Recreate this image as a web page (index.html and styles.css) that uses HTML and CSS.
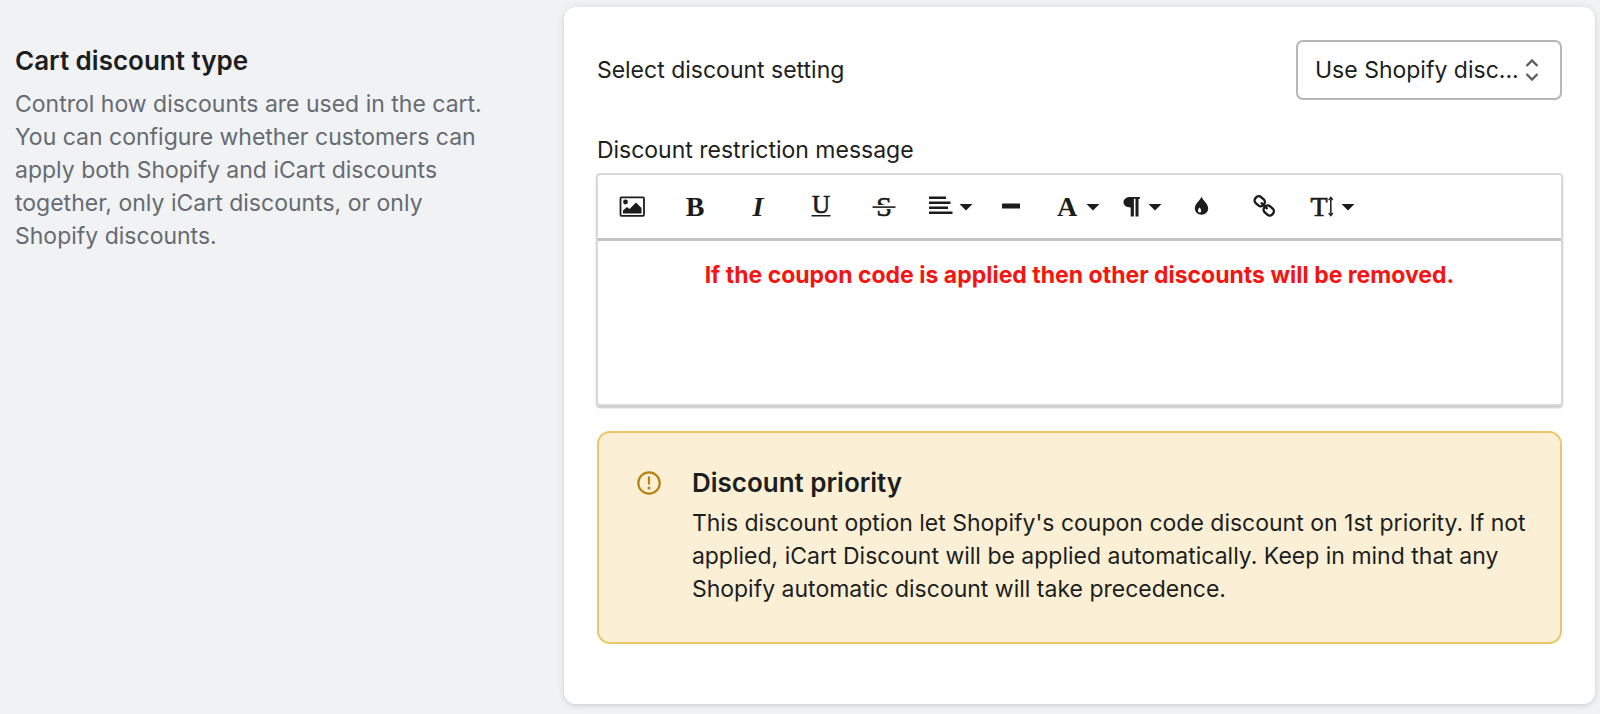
FILE: index.html
```html
<!DOCTYPE html>
<html lang="en">
<head>
<meta charset="utf-8">
<meta name="viewport" content="width=device-width, initial-scale=1">
<title>Cart discount type</title>
<link rel="stylesheet" href="styles.css">
</head>
<body>
<main class="section">
  <header class="intro">
    <h2 class="heading">Cart discount type</h2>
    <p class="intro-text">Control how discounts are used in the cart. You can configure whether customers can apply both Shopify and iCart discounts together, only iCart discounts, or only Shopify discounts.</p>
  </header>
  <section class="card">
    <div class="setting-row">
      <label for="setting">Select discount setting</label>
      <div class="select-wrap">
        <select id="setting" class="select"><option>Use Shopify disc...</option></select>
        <svg class="select-icon" width="14" height="22" viewBox="0 0 14 22" aria-hidden="true"><path d="M1.500 7 7 1.500 12.500 7M1.500 15 7 20.500 12.500 15"/></svg>
      </div>
    </div>
    <div class="message-label" id="message-label">Discount restriction message</div>
    <div class="editor">
      <div class="toolbar" role="toolbar" aria-label="Text formatting">
        <button class="tool" type="button" aria-label="Insert image"><svg width="26" height="24" viewBox="0 0 26 24"><rect x="1.500" y="2.300" width="23.500" height="18.500" rx="1" fill="none" stroke="currentColor" stroke-width="1.800"/><circle cx="6.500" cy="7" r="2.400"/><path d="M4 18.500v-3l4-3.500 2.500 2 6.500-6.500 5.500 5.500v5.500z"/></svg></button>
        <button class="tool" type="button" aria-label="Bold"><svg width="26" height="36" viewBox="0 -6 26 36"><text class="glyph bold" x="13" y="21">B</text></svg></button>
        <button class="tool" type="button" aria-label="Italic"><svg width="26" height="36" viewBox="0 -6 26 36"><text class="glyph bold italic" x="13" y="21">I</text></svg></button>
        <button class="tool" type="button" aria-label="Underline"><svg width="26" height="36" viewBox="0 -6 26 36"><text class="glyph medium small" x="13" y="18">U</text><path d="M3.500 20h19v1.500h-19z"/></svg></button>
        <button class="tool" type="button" aria-label="Strikethrough"><svg width="26" height="36" viewBox="0 -6 26 36"><text class="glyph medium" x="13" y="21">S</text><path d="M1 10h24v4H1z" fill="#fff"/><path d="M1.500 11.300h23v1.600h-23z"/></svg></button>
        <button class="tool menu" type="button" aria-label="Align"><svg width="24" height="24" viewBox="0 0 24 24"><path d="M0 1.500h17V4H0zM0 6.500h21.500V9H0zM0 11.500h19V14H0zM0 16.500h23.500V19H0z"/></svg><svg class="caret" width="14" height="8" viewBox="0 0 14 8"><path d="M.5 1h13L7 7.500z"/></svg></button>
        <button class="tool" type="button" aria-label="Horizontal rule"><svg width="26" height="24" viewBox="0 0 26 24"><rect x="4" y="8.500" width="18" height="5" rx=".5"/></svg></button>
        <button class="tool menu" type="button" aria-label="Text color"><svg width="24" height="36" viewBox="0 -6 24 36"><text class="glyph bold" x="11" y="21">A</text></svg><svg class="caret" width="14" height="8" viewBox="0 0 14 8"><path d="M.5 1h13L7 7.500z"/></svg></button>
        <button class="tool menu" type="button" aria-label="Paragraph format"><svg width="20" height="24" viewBox="0 0 20 24"><path d="M18 2v1.800h-1.500V21.500h-3V3.800h-1.600V21.500H8.700V12.500C4.500 12.500 1.500 10.500 1.500 7.300 1.500 4 4.500 2 8.400 2z"/></svg><svg class="caret" width="14" height="8" viewBox="0 0 14 8"><path d="M.5 1h13L7 7.500z"/></svg></button>
        <button class="tool" type="button" aria-label="Highlight color"><svg width="26" height="24" viewBox="0 0 26 24"><path fill-rule="evenodd" d="M12.500 1.500c1 3.800 6.700 7 6.700 12a6.700 6.200 0 0 1-13.400 0c0-5 5.700-8.200 6.700-12zM10.500 12.500c-2 2-2 5 .2 5s2-2.700-.2-5z"/></svg></button>
        <button class="tool" type="button" aria-label="Insert link"><svg width="26" height="24" viewBox="0 0 26 24"><g fill="none" stroke="currentColor" stroke-width="2.400"><rect x="2.500" y="2.200" width="10.500" height="8" rx="3.500" transform="rotate(42 7.700 6.200)"/><rect x="11.500" y="11.500" width="10.500" height="8" rx="3.500" transform="rotate(42 16.700 15.500)"/><path d="m9 7.500 6.500 6.500"/></g></svg></button>
        <button class="tool menu" type="button" aria-label="Font size"><svg width="26" height="36" viewBox="0 -6 26 36"><text class="glyph medium" x="10" y="21">T</text><path d="M21.800 4.500v14M19.800 5l2-2.500 2 2.500M19.800 18l2 2.500 2-2.500" fill="none" stroke="currentColor" stroke-width="1.500"/></svg><svg class="caret" width="14" height="8" viewBox="0 0 14 8"><path d="M.5 1h13L7 7.500z"/></svg></button>
      </div>
      <div class="message" contenteditable="true" role="textbox" aria-multiline="true" aria-labelledby="message-label" spellcheck="false">If the coupon code is applied then other discounts will be removed.</div>
    </div>
    <aside class="notice">
      <svg class="notice-icon" width="24" height="24" viewBox="0 0 24 24" aria-hidden="true"><circle cx="12" cy="12" r="10.700"/><path d="M12 5.500v8"/><circle class="dot" cx="12" cy="17" r="1.500"/></svg>
      <div>
        <h3 class="heading">Discount priority</h3>
        <p class="notice-text">This discount option let Shopify's coupon code discount on 1st priority. If not applied, iCart Discount will be applied automatically. Keep in mind that any Shopify automatic discount will take precedence.</p>
      </div>
    </aside>
  </section>
</main>
</body>
</html>
```

FILE: styles.css
```css
* {
  box-sizing: border-box;
}

body {
  margin: 0;
  background: #f0f2f4;
  color: #1c1e20;
  font: 400 23px/33px Inter, "Liberation Sans", sans-serif;
}

.section {
  display: grid;
  grid-template-columns: 35fr 64fr;
  padding: 7px 5px 10px 0;
}

.intro {
  padding: 36px 75px 0 15px;
}

.heading {
  margin: 0;
  font-size: 26px;
  line-height: 36px;
  font-weight: 600;
}

.intro-text,
.notice-text {
  margin: 0;
}

.intro-text {
  margin-top: 9px;
  color: #666b72;
}

.card {
  padding: 33px 33px 60px;
  border-radius: 12px;
  background: #fff;
  box-shadow: 0 0 10px rgba(23, 24, 24, 0.08), 0 2px 4px rgba(0, 0, 0, 0.08);
}

.setting-row {
  display: flex;
  align-items: center;
  justify-content: space-between;
}

.select-wrap {
  position: relative;
}

.select {
  appearance: none;
  width: 266px;
  height: 60px;
  padding: 0 38px 0 17px;
  border: 2px solid #b4b6b8;
  border-radius: 7px;
  background: #fff;
  color: #1c1e20;
  font: inherit;
}

.select-icon {
  position: absolute;
  top: 19px;
  right: 23px;
  fill: none;
  stroke: #5c5f62;
  stroke-width: 2.4;
  pointer-events: none;
}

.message-label {
  margin-top: 34px;
}

.editor {
  margin: 6px -1px 0;
  border: 2px solid #d6d8d9;
  border-radius: 4px;
  box-shadow: 0 2px 2px rgba(0, 0, 0, 0.22);
}

.toolbar {
  display: flex;
  height: 66px;
  padding-left: 3px;
  border-bottom: 3px solid #c4c4c4;
}

.tool {
  display: flex;
  align-items: center;
  justify-content: center;
  width: 63px;
  padding: 0;
  border: 0;
  background: none;
  color: #1c1c1c;
}

.tool svg {
  flex: none;
  fill: currentColor;
}

.menu {
  gap: 6px;
  width: 64px;
  padding-left: 6px;
}

.glyph {
  font: 28px "Liberation Serif", serif;
  text-anchor: middle;
}

.bold {
  font-weight: 700;
}

.medium {
  stroke: currentColor;
  stroke-width: 0.7;
}

.italic {
  font-style: italic;
}

.small {
  font-size: 25px;
}

.message {
  min-height: 163px;
  padding: 18px 20px;
  color: #f5140f;
  font-weight: 700;
  text-align: center;
  outline: none;
}

.notice {
  display: flex;
  gap: 31px;
  margin-top: 25px;
  padding: 32px 20px 36px 38px;
  border: 2px solid #ecc765;
  border-radius: 13px;
  background: #fbf0d5;
}

.notice-icon {
  flex: none;
  margin-top: 6px;
  fill: none;
  stroke: #b98012;
  stroke-width: 2.2;
}

.dot {
  fill: #b98012;
  stroke: none;
}

.notice-text {
  margin-top: 6px;
}
```
